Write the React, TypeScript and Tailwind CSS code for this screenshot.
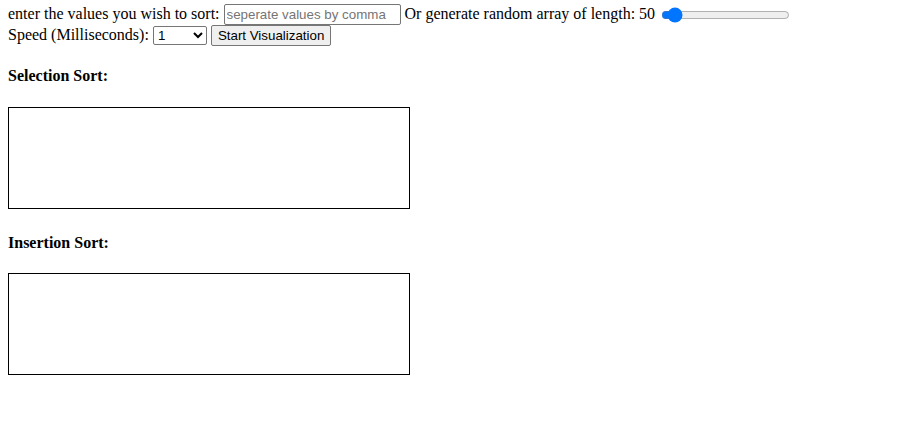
export default function App() {
  return (
    <div className="min-h-[438px] bg-white px-2 pt-1 font-['Liberation_Serif','Times_New_Roman',serif] text-base leading-[normal] text-black">
      <div>
        enter the values you wish to sort:{" "}
        <input
          type="text"
          placeholder="seperate values by comma"
          className="h-[21px] w-[177px] rounded-[2px] border border-[#767676] px-[2px] py-[1px] font-['Liberation_Sans',Arial,sans-serif] text-[13.33px] leading-[normal] placeholder:text-[#757575]"
        />{" "}
        Or generate random array of length: 50{" "}
        <input
          type="range"
          min={0}
          max={1000}
          defaultValue={50}
          className="mx-[2px] w-[129px] accent-[#0075ff] align-middle"
        />
        <br />
        Speed (Milliseconds):{" "}
        <select
          defaultValue="1"
          className="h-[19px] w-[54px] rounded-[2px] border border-[#767676] bg-white font-['Liberation_Sans',Arial,sans-serif] text-[13.33px] leading-[normal]"
        >
          <option value="1">1</option>
          <option value="10">10</option>
          <option value="100">100</option>
          <option value="500">500</option>
        </select>{" "}
        <button
          type="button"
          className="h-[21px] rounded-[2px] border border-[#767676] bg-[#efefef] px-[6px] py-[1px] font-['Liberation_Sans',Arial,sans-serif] text-[13.33px] leading-[normal]"
        >
          Start Visualization
        </button>
      </div>

      <h4 className="my-[21.28px] font-bold">Selection Sort:</h4>
      <canvas width={400} height={100} className="inline align-baseline border border-black" />

      <h4 className="my-[21.28px] font-bold">Insertion Sort:</h4>
      <canvas width={400} height={100} className="inline align-baseline border border-black" />
    </div>
  );
}
